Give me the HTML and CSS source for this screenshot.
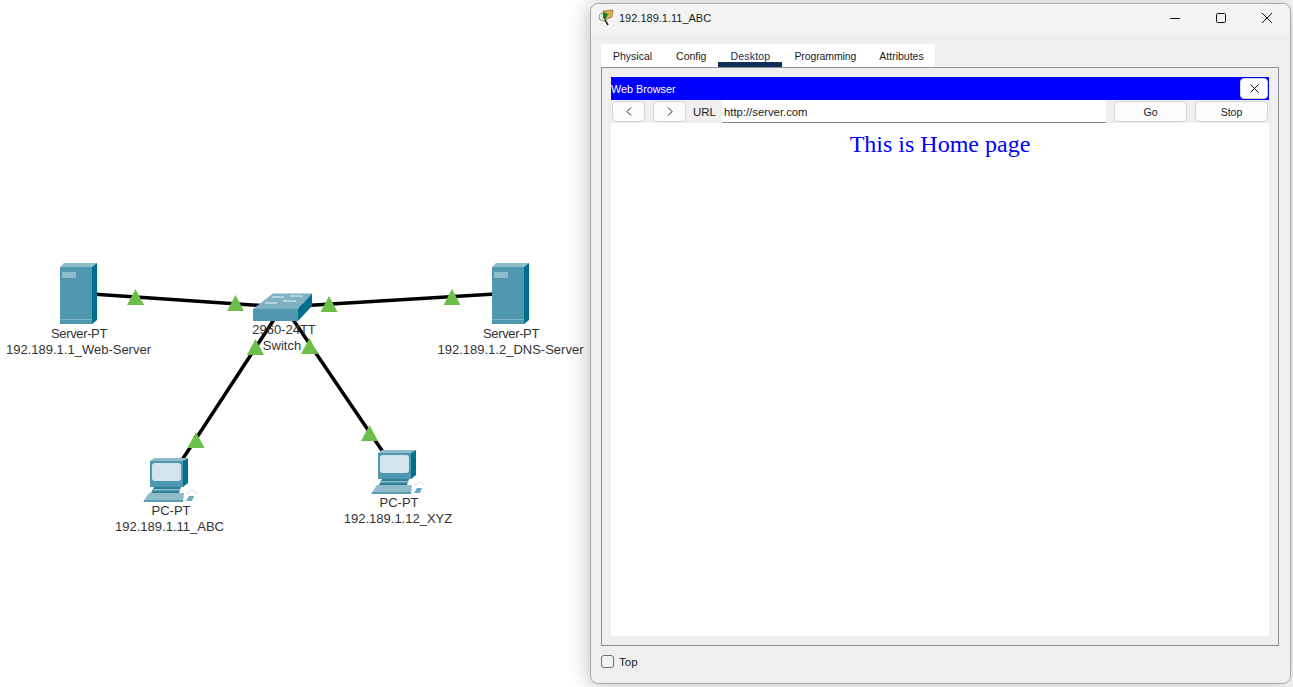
FILE: index.html
```html
<!DOCTYPE html>
<html lang="en">
<head>
    <meta charset="UTF-8">
    <title>Web Browser</title>
    <link rel="stylesheet" href="styles.css">
</head>
<body>
    <!-- Logical workspace -->
    <svg class="topology" width="590" height="687" viewBox="0 0 590 687">
        <defs>
            <g id="server">
                <polygon points="60,267 64,263 97,263 92,267" fill="#8fbccb"/>
                <polygon points="92,267 97,263 97,320 92,324" fill="#01708f"/>
                <rect x="60" y="267" width="32" height="57" fill="#5097b0"/>
                <rect x="62" y="272" width="14" height="6" fill="#8dbccd"/>
                <rect x="60" y="319" width="32" height="1" fill="#7fb3c6"/>
            </g>
            <g id="pc">
                <polygon points="150,461 154,458 188,458 183,461" fill="#8fbccb"/>
                <polygon points="183,461 188,458 188,483 183,487" fill="#01708f"/>
                <rect x="150" y="461" width="33" height="26" fill="#4f96af"/>
                <rect x="152" y="463" width="29" height="18" rx="3" fill="#d3e5ec"/>
                <polygon points="154,487 181,487 179,493 151,493" fill="#2f7f9c"/>
                <rect x="152" y="489" width="28" height="1.500" fill="#8fbccb"/>
                <polygon points="149,493 184,493 183,502 143,502" fill="#8fbccb"/>
                <rect x="144" y="500" width="39" height="2" fill="#5c9db5"/>
                <polygon points="186,501 189,496 194,496 192,501" fill="#6ea9bd"/>
                <path d="M187 494 C190 488 195 489 196 494" fill="none" stroke="#cfe0e6"/>
            </g>
            <polygon id="link" points="0,0 8.5,16 -8.5,16" fill="#6cbf4b"/>
        </defs>

        <g stroke="#000" stroke-width="3.5">
            <line x1="92" y1="294" x2="282" y2="307"/>
            <line x1="495" y1="294" x2="282" y2="307"/>
            <line x1="182" y1="460" x2="275" y2="318"/>
            <line x1="383" y1="452" x2="292" y2="318"/>
        </g>

        <use href="#server"/>
        <use href="#server" x="432"/>
        <use href="#pc"/>
        <use href="#pc" x="228" y="-8"/>

        <!-- switch -->
        <polygon points="253,309 273,293.5 312,293.5 298,309" fill="#7fb1c4"/>
        <polygon points="298,309 312,293.5 312,306 298,321" fill="#01708f"/>
        <rect x="253" y="309" width="45" height="12" fill="#5097b0"/>
        <g stroke="#d9e8ee" stroke-width="1.2">
            <line x1="272" y1="297" x2="284" y2="297"/>
            <line x1="290" y1="296" x2="303" y2="296"/>
            <line x1="265" y1="303" x2="277" y2="303"/>
            <line x1="283" y1="301" x2="296" y2="301"/>
        </g>

        <g class="node-label">
            <text class="tight" x="79" y="338">Server-PT</text>
            <text x="78.500" y="354">192.189.1.1_Web-Server</text>
            <text class="tight" x="511" y="338">Server-PT</text>
            <text x="510.500" y="354">192.189.1.2_DNS-Server</text>
            <text x="284" y="334">2960-24TT</text>
            <text x="282" y="350">Switch</text>
            <text x="171" y="515">PC-PT</text>
            <text x="169.500" y="531">192.189.1.11_ABC</text>
            <text x="399" y="507">PC-PT</text>
            <text x="398" y="523">192.189.1.12_XYZ</text>
        </g>

        <use href="#link" x="135.500" y="289"/>
        <use href="#link" x="235.500" y="295"/>
        <use href="#link" x="255.500" y="339"/>
        <use href="#link" x="329" y="296"/>
        <use href="#link" x="309.500" y="338"/>
        <use href="#link" x="452" y="289"/>
        <use href="#link" x="196" y="432"/>
        <use href="#link" x="369.500" y="425"/>
    </svg>

    <!-- Device window -->
    <div class="window">
        <div class="titlebar">
            <svg class="app-icon" width="17" height="17" viewBox="0 0 17 17">
                <circle cx="5" cy="8" r="4" fill="#e6e6e6" stroke="#9a9a9a"/>
                <line x1="7" y1="11" x2="10" y2="16" stroke="#222" stroke-width="1.5"/>
                <polygon points="5,2 15,1 14,8 7,11" fill="#d9a94e" stroke="#7a5a1e" stroke-width=".6"/>
                <polygon points="5,3 10,5 7,11 5,9" fill="#1c7a2c"/>
            </svg>
            <span class="title">192.189.1.11_ABC</span>
            <div class="win-controls">
                <svg width="12" height="12" viewBox="0 0 12 12"><line x1="1" y1="6.500" x2="11" y2="6.500" stroke="#111"/></svg>
                <svg width="12" height="12" viewBox="0 0 12 12"><rect x="1.500" y="1.500" width="9" height="9" rx="1" fill="none" stroke="#111"/></svg>
                <svg width="12" height="12" viewBox="0 0 12 12"><path d="M1 1L11 11M11 1L1 11" stroke="#111" fill="none"/></svg>
            </div>
        </div>

        <div class="tabs">
            <div class="tab">Physical</div>
            <div class="tab">Config</div>
            <div class="tab active">Desktop</div>
            <div class="tab tab-long">Programming</div>
            <div class="tab tab-last">Attributes</div>
        </div>

        <div class="panel">
            <div class="browser-bar">
                <span>Web Browser</span>
                <button class="btn close-btn" type="button">
                    <svg width="9" height="9" viewBox="0 0 9 9"><path d="M.5 .5L8.500 8.500M8.500 .5L.5 8.500" stroke="#111" fill="none"/></svg>
                </button>
            </div>
            <div class="browser-nav">
                <button class="btn nav-btn" type="button">
                    <svg width="6" height="9" viewBox="0 0 6 9"><path d="M5 .5L1 4.500L5 8.500" stroke="#222" fill="none"/></svg>
                </button>
                <button class="btn nav-btn" type="button">
                    <svg width="6" height="9" viewBox="0 0 6 9"><path d="M1 .5L5 4.500L1 8.500" stroke="#222" fill="none"/></svg>
                </button>
                <label class="url-label" for="url">URL</label>
                <input class="url-input" id="url" type="text" value="http://server.com">
                <button class="btn action-btn" type="button">Go</button>
                <button class="btn action-btn" type="button">Stop</button>
            </div>
            <div class="page-view">
                <h1>This is Home page</h1>
            </div>
        </div>

        <div class="footer">
            <input class="top-check" id="top" type="checkbox">
            <label for="top">Top</label>
        </div>
    </div>
</body>
</html>
```

FILE: styles.css
```css
html, body {
    margin: 0;
    padding: 0;
    height: 100%;
}
body {
    position: relative;
    width: 1293px;
    height: 687px;
    overflow: hidden;
    background-color: #fff;
    font-family: "Liberation Sans", Arial, sans-serif;
    font-size: 10.5px;
    color: #1a1a1a;
}
.topology {
    position: absolute;
    left: 0;
    top: 0;
}
.node-label text {
    font-family: "Liberation Sans", Arial, sans-serif;
    font-size: 13px;
    fill: #333;
    text-anchor: middle;
}
.node-label .tight {
    letter-spacing: -0.35px;
}

/* window */
.window {
    position: absolute;
    left: 590px;
    top: 3px;
    width: 701px;
    height: 681px;
    box-sizing: border-box;
    display: flex;
    flex-direction: column;
    background-color: #efefef;
    border: 1px solid #a9a9a9;
    border-radius: 8px;
    box-shadow: 0 0 22px rgba(0, 0, 0, 0.28);
}
.titlebar {
    height: 30px;
    box-sizing: border-box;
    flex: none;
    display: flex;
    align-items: center;
    padding: 0 0 3px 7px;
    background-color: #f3f3f3;
    border-radius: 8px 8px 0 0;
}
.app-icon {
    margin-right: 4px;
}
.title {
    font-size: 11px;
}
.win-controls {
    margin-left: auto;
    margin-right: 17px;
    display: flex;
    gap: 34px;
}

/* tabs */
.tabs {
    display: flex;
    flex: none;
    align-self: flex-start;
    height: 23px;
    margin: 10px 0 0 10px;
    background-color: #fff;
}
.tab {
    padding: 5px 12px 0;
    box-sizing: border-box;
    line-height: 14px;
}
.tab.active {
    color: #14315c;
    letter-spacing: 0.2px;
    border-bottom: 5px solid #0f2d55;
}
.tab-long {
    letter-spacing: -0.1px;
}
.tab-last {
    padding: 5px 11px 0;
}

.panel {
    flex: none;
    height: 579px;
    box-sizing: border-box;
    margin: 0 11px 0 10px;
    padding: 9px;
    display: flex;
    flex-direction: column;
    border: 1px solid #8a8f98;
}
.browser-bar {
    flex: none;
    height: 23px;
    display: flex;
    align-items: center;
    justify-content: space-between;
    padding-right: 1px;
    font-size: 10.800px;
    background-color: #0000ff;
    color: #fff;
}
.btn {
    padding: 0;
    box-sizing: border-box;
    height: 21px;
    font-family: inherit;
    font-size: 10.500px;
    color: inherit;
    background-color: #fbfbfb;
    border: 1px solid #d6d6d6;
    border-radius: 4px;
    display: flex;
    align-items: center;
    justify-content: center;
}
.close-btn {
    width: 28px;
    background-color: #fff;
    color: #111;
}
.browser-nav {
    flex: none;
    height: 23px;
    display: flex;
    align-items: center;
    gap: 8px;
    padding: 0 1px;
}
.nav-btn {
    width: 33px;
}
.url-label {
    width: 29px;
    box-sizing: border-box;
    margin: 0 -8px;
    padding-left: 7px;
    font-size: 11.500px;
}
.url-input {
    flex: 1;
    min-width: 0;
    height: 23px;
    box-sizing: border-box;
    padding: 1px 2px 0;
    margin-left: 7px;
    font-family: inherit;
    font-size: 11.300px;
    background-color: #fff;
    color: #1a1a1a;
    border: none;
    border-bottom: 1px solid #8a8a8a;
    outline: none;
}
.action-btn {
    width: 73px;
}
.page-view {
    flex: 1;
    background-color: #fff;
}
.page-view h1 {
    margin: 8px 0 0;
    font-family: "Liberation Serif", "Times New Roman", serif;
    font-size: 24px;
    font-weight: normal;
    text-align: center;
    color: #0000ff;
}

.footer {
    flex: 1;
    display: flex;
    align-items: center;
    gap: 5px;
    padding: 0 0 6px 10px;
    font-size: 11.500px;
}
.top-check {
    appearance: none;
    width: 13px;
    height: 13px;
    margin: 0;
    box-sizing: border-box;
    border: 1px solid #6f6f6f;
    border-radius: 3px;
    background-color: #f4f4f4;
}
```
